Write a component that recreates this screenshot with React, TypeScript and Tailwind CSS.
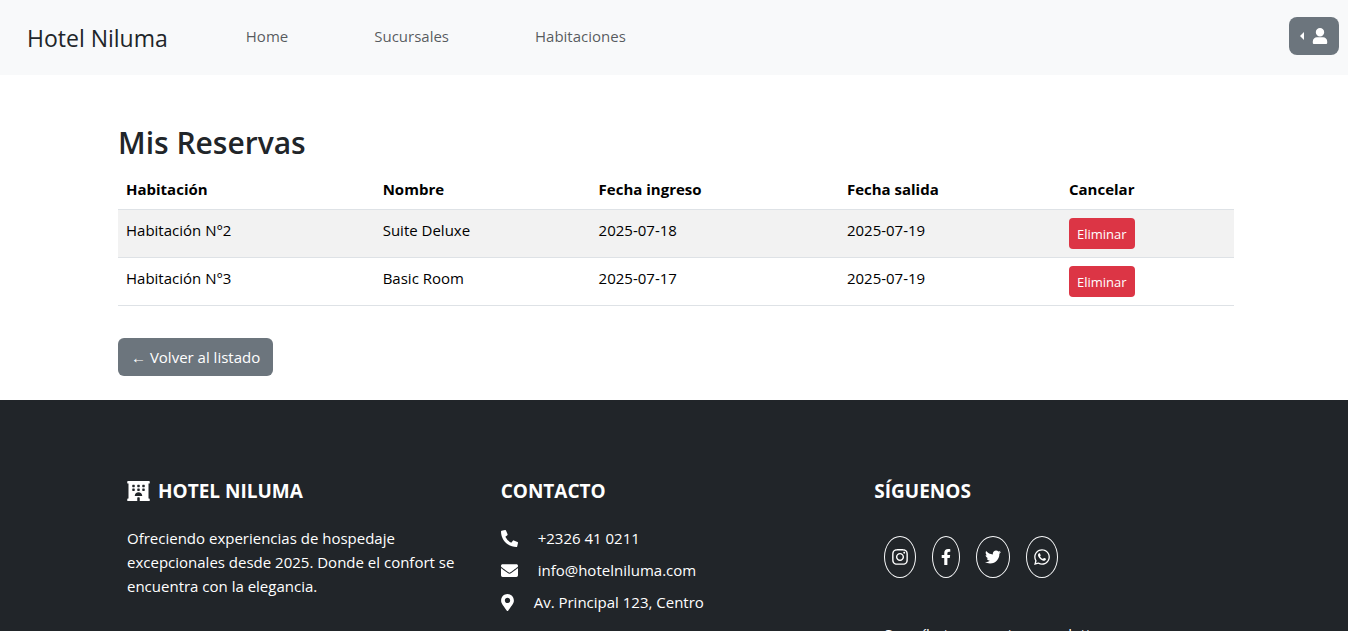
import React from "react";
import {
  FaEnvelope,
  FaFacebookF,
  FaHotel,
  FaInstagram,
  FaMapMarkerAlt,
  FaPhoneAlt,
  FaTwitter,
  FaUser,
  FaWhatsapp,
} from "react-icons/fa";

const navLinks = ["Home", "Sucursales", "Habitaciones"];

const bookings = [
  { room: "Habitación N°2", name: "Suite Deluxe", from: "2025-07-18", to: "2025-07-19" },
  { room: "Habitación N°3", name: "Basic Room", from: "2025-07-17", to: "2025-07-19" },
];

const socials = [
  { label: "Instagram", Icon: FaInstagram, size: "w-8", icon: "h-[18px] w-4" },
  { label: "Facebook", Icon: FaFacebookF, size: "w-7", icon: "h-4 w-[10px]" },
  { label: "Twitter", Icon: FaTwitter, size: "w-[34px]", icon: "h-4 w-4" },
  { label: "WhatsApp", Icon: FaWhatsapp, size: "w-8", icon: "h-[18px] w-4" },
];

function Navbar() {
  return (
    <header className="flex h-[75px] items-center bg-[#f8f9fa] pr-[9px] pb-[3px] pl-[27px]">
      <a href="#" className="pt-[3px] text-[23px] text-[#212529]">Hotel Niluma</a>
      <nav className="ml-[78px] flex gap-[86px]">
        {navLinks.map((label) => (
          <a key={label} href="#" className="text-[#212529]/75">{label}</a>
        ))}
      </nav>
      <button
        type="button"
        aria-label="Usuario"
        className="ml-auto flex h-[38px] w-[50px] items-center justify-center gap-2 rounded-lg bg-[#6c757d] text-white"
      >
        <svg viewBox="0 0 4 8" className="h-2 w-1" fill="currentColor" aria-hidden="true">
          <path d="M4 0v8L0 4z" />
        </svg>
        <svg viewBox="0 0 16 16" className="size-4" fill="currentColor" aria-hidden="true">
          <path d="M8 0a4.2 4.2 0 1 1 0 8.400A4.2 4.2 0 0 1 8 0zM5 9.200h6A4.200 4.200 0 0 1 15.200 13.400V15a1 1 0 0 1-1 1H1.800a1 1 0 0 1-1-1v-1.600A4.200 4.200 0 0 1 5 9.200z" />
        </svg>
      </button>
    </header>
  );
}

function Bookings() {
  return (
    <main className="mx-auto w-full max-w-[1140px] pt-12 pr-[10px] pb-6 pl-[14px]">
      <h1 className="mb-2 pt-px text-[30px] leading-[38px] font-semibold text-[#212529]">Mis Reservas</h1>
      <table className="w-full table-fixed border-collapse text-left text-black">
        <colgroup>
          <col className="w-[23%]" />
          <col className="w-[19.35%]" />
          <col className="w-[22.25%]" />
          <col className="w-[19.9%]" />
          <col className="w-[15.5%]" />
        </colgroup>
        <thead>
          <tr className="border-b border-[#dee2e6]">
            <th className="px-2 pt-[7px] pb-2">Habitación</th>
            <th className="px-2 pt-[7px] pb-2">Nombre</th>
            <th className="px-2 pt-[7px] pb-2">Fecha ingreso</th>
            <th className="px-2 pt-[7px] pb-2">Fecha salida</th>
            <th className="px-2 pt-[7px] pb-2">Cancelar</th>
          </tr>
        </thead>
        <tbody>
          {bookings.map((b) => (
            <tr key={b.room} className="border-b border-[#dee2e6] align-top odd:bg-[#f2f2f2]">
              <td className="p-2">{b.room}</td>
              <td className="p-2">{b.name}</td>
              <td className="p-2">{b.from}</td>
              <td className="p-2">{b.to}</td>
              <td className="p-2">
                <button type="button" className="block h-[31px] rounded bg-[#dc3545] px-2 text-[13px] text-white">
                  Eliminar
                </button>
              </td>
            </tr>
          ))}
        </tbody>
      </table>
      <a href="#" className="mt-8 inline-flex h-[38px] items-center rounded-md bg-[#6c757d] px-[13px] text-white">
        ← Volver al listado
      </a>
    </main>
  );
}

function Footer() {
  return (
    <footer className="bg-[#212529] pt-[79px] pb-12 text-white">
      <div className="mx-auto grid max-w-[1120px] grid-cols-3 px-[13px]">
        <section>
          <h2 className="mb-[23px] flex items-center gap-2 text-[19px] leading-6 font-bold">
            <FaHotel className="h-5 w-[23px]" />
            HOTEL NILUMA
          </h2>
          <p className="max-w-[350px]">
            Ofreciendo experiencias de hospedaje excepcionales desde 2025. Donde el confort se encuentra con la
            elegancia.
          </p>
        </section>
        <section className="pl-[9px]">
          <h2 className="mb-[23px] text-[19px] leading-6 font-bold">CONTACTO</h2>
          <ul className="flex flex-col gap-2">
            <li className="flex items-center gap-5"><FaPhoneAlt className="size-[17px]" />+2326 41 0211</li>
            <li className="flex items-center gap-5"><FaEnvelope className="size-[17px]" />info@hotelniluma.com</li>
            <li className="flex items-center gap-5"><FaMapMarkerAlt className="h-[17px] w-[13px]" />Av. Principal 123, Centro</li>
          </ul>
        </section>
        <section className="pl-[18px]">
          <h2 className="mb-8 text-[19px] leading-6 font-bold">SÍGUENOS</h2>
          <div className="ml-[10px] flex gap-4">
            {socials.map(({ label, Icon, size, icon }) => (
              <a
                key={label}
                href="#"
                aria-label={label}
                className={`mt-px flex h-[42px] items-center justify-center rounded-[50%] border border-[#f8f9fa] ${size}`}
              >
                <Icon className={icon} />
              </a>
            ))}
          </div>
          <p className="mt-11 ml-[10px]">Suscríbete a nuestro newsletter</p>
        </section>
      </div>
    </footer>
  );
}

export default function App() {
  return (
    <div className="min-h-screen bg-white font-['Open_Sans','Noto_Sans',sans-serif] text-[15px] leading-6">
      <Navbar />
      <Bookings />
      <Footer />
    </div>
  );
}
